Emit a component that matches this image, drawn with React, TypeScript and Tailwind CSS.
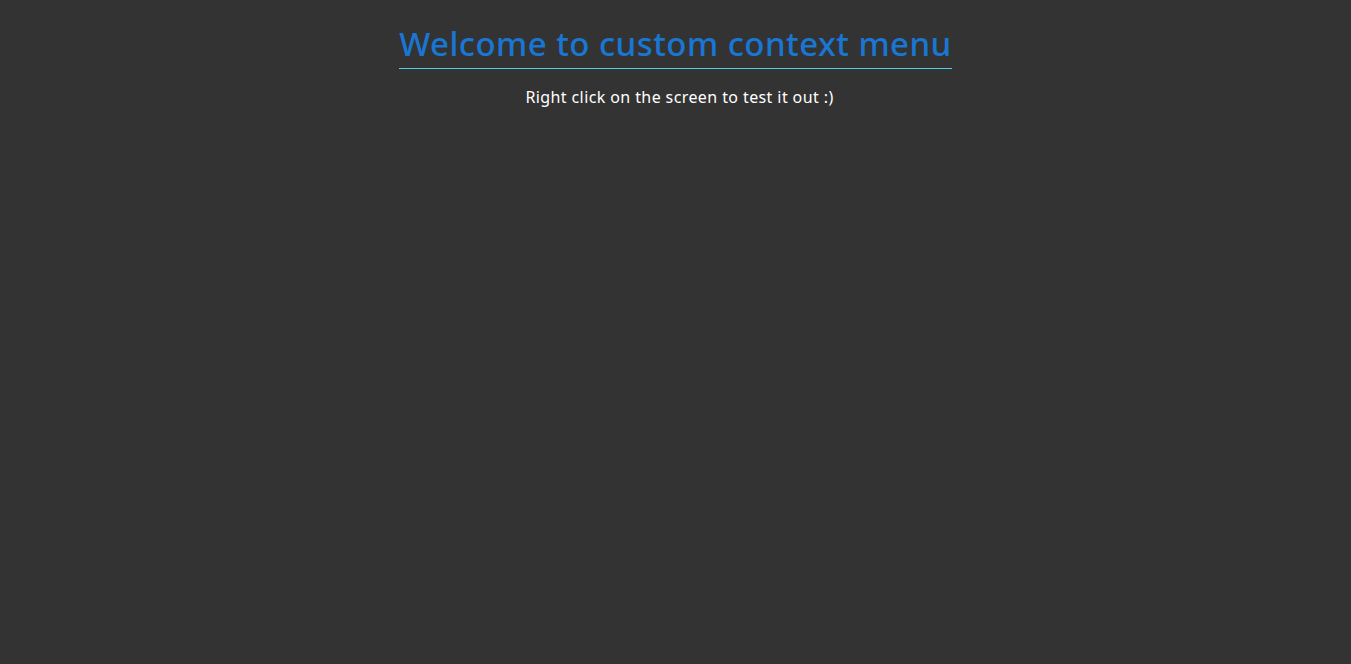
import React from 'react';

const App: React.FC = () => {
  return (
    <div
      className="min-h-screen w-full bg-[#333333] flex flex-col items-center pt-[22px]"
      style={{ fontFamily: '"Noto Sans", "Liberation Sans", sans-serif' }}
    >
      <h1 className="text-[33px] leading-[44px] font-medium text-[#1976d2] border-b border-[#4dd0e1] pb-[2px] tracking-[0.45px]">
        Welcome to custom context menu
      </h1>
      <p className="mt-[16px] pl-[8px] text-[16px] text-white tracking-[0.4px]">
        Right click on the screen to test it out :)
      </p>
    </div>
  );
};

export default App;
